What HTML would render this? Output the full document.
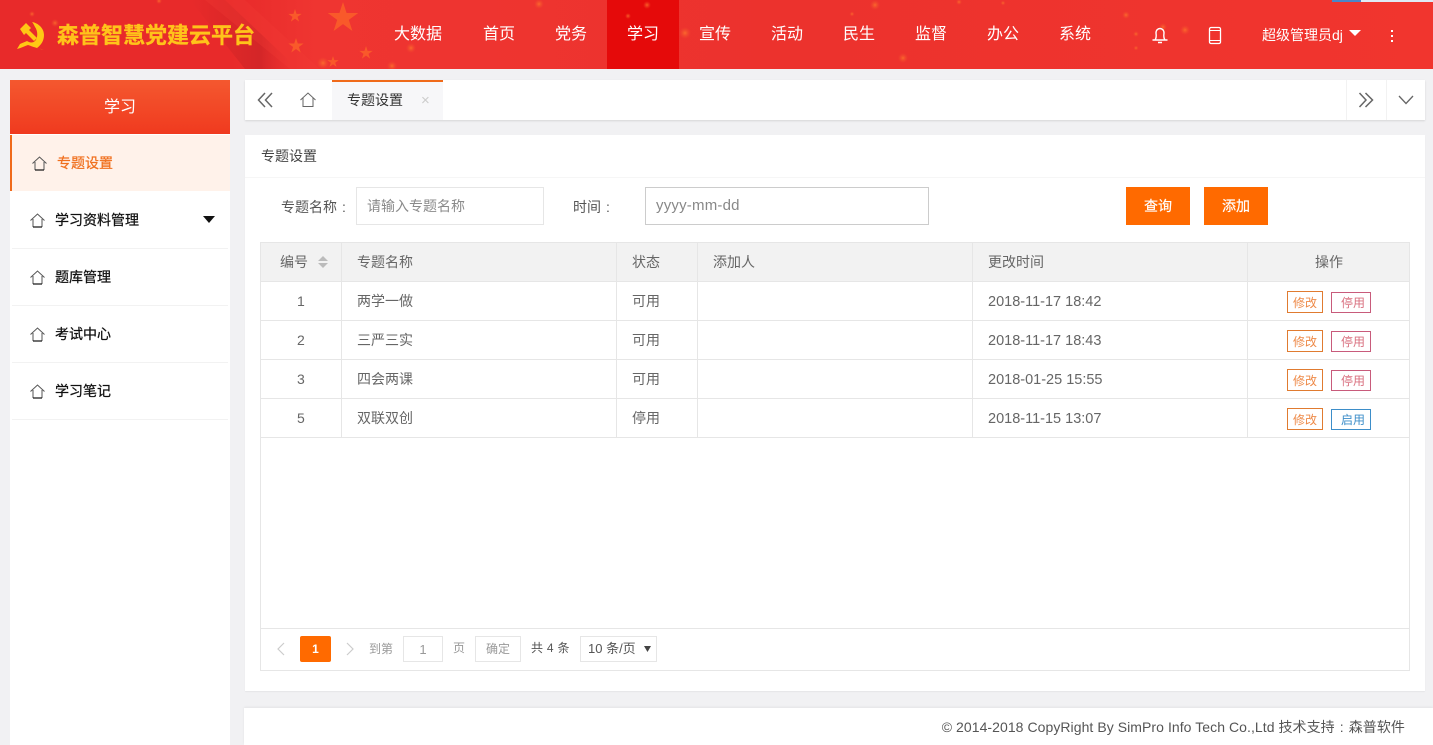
<!DOCTYPE html>
<html lang="zh"><head><meta charset="utf-8"><title>森普智慧党建云平台</title>
<style>
html,body{margin:0;padding:0;width:1433px;height:745px;overflow:hidden;background:#f1f1f3;font-family:"Liberation Sans","Noto Sans CJK SC",sans-serif;font-size:14px;color:#666}
.a{position:absolute;box-sizing:border-box}
.t{position:absolute;white-space:nowrap;line-height:20px}
.n{color:#fff;font-size:16px;top:25px}
.s{color:#111;top:0;-webkit-text-stroke:.25px #111}
.l{position:absolute;background:#e6e6e6}
.b{position:absolute;box-sizing:border-box;font-size:12px;line-height:22px;text-align:center;height:22px}
.e{border:1px solid #e07b30;color:#ee8a48;left:1287px;width:36px}
.d{border:1px solid #c85b7b;color:#d9707f;left:1331px;width:40px;height:21px;padding-left:4px;line-height:20px}
.o{border:1px solid #3d8ec9;color:#3d8ec9;left:1331px;width:40px;height:21px;padding-left:4px;line-height:20px}
.dt{font-size:14.5px;margin-top:1px}
.c{display:inline-block;width:14px;text-align:center}
svg{position:absolute;display:block}
</style></head><body>

<!-- header -->
<div class="a" style="left:0;top:0;width:1433px;height:69px;background:#ec2f2d;overflow:hidden">
<svg style="left:0;top:0" width="1433" height="69" viewBox="0 0 1433 69">
<defs>
<linearGradient id="g0" x1="0" x2="1" y1="0" y2="0"><stop offset="0" stop-color="#e82a2a"/><stop offset=".16" stop-color="#e82a2a"/><stop offset=".22" stop-color="#ef3531"/><stop offset=".55" stop-color="#ec322d"/><stop offset="1" stop-color="#f1352e"/></linearGradient>
<linearGradient id="g1" x1="0" x2="1" y1="0" y2="0"><stop offset="0" stop-color="#cf2425" stop-opacity="0"/><stop offset=".65" stop-color="#cc2326" stop-opacity=".75"/><stop offset="1" stop-color="#ea3030" stop-opacity="0"/></linearGradient>
<radialGradient id="g2"><stop offset="0" stop-color="#ff7a2c" stop-opacity=".75"/><stop offset="1" stop-color="#f4502c" stop-opacity="0"/></radialGradient>
<polygon id="st" points="0,-1 .225,-.309 .951,-.309 .363,.118 .588,.809 0,.382 -.588,.809 -.363,.118 -.951,-.309 -.225,-.309"/>
</defs>
<rect width="1433" height="69" fill="url(#g0)"/>
<polygon points="190,0 225,0 298,69 245,69" fill="url(#g1)"/>
<polygon points="205,0 245,0 320,69 290,69" fill="#f23b36" opacity=".3"/>
<g fill="#f9592a">
<use href="#st" transform="translate(343,18) scale(16)"/>
<use href="#st" transform="translate(295,16) scale(7)"/>
<use href="#st" transform="translate(296,46) scale(8)"/>
<use href="#st" transform="translate(366,53) scale(7)"/>
<use href="#st" transform="translate(333,62) scale(6)"/>
</g>
<g fill="url(#g2)">
<circle cx="411" cy="48" r="5"/><circle cx="323" cy="63" r="6"/><circle cx="392" cy="66" r="5"/>
<circle cx="32" cy="14" r="3"/><circle cx="55" cy="23" r="4"/><circle cx="159" cy="1" r="3"/>
<circle cx="539" cy="4" r="5"/><circle cx="665" cy="2" r="5"/><circle cx="685" cy="33" r="6"/>
<circle cx="875" cy="5" r="5"/><circle cx="852" cy="14" r="2.5"/><circle cx="903" cy="58" r="5"/>
<circle cx="959" cy="2" r="3"/><circle cx="1003" cy="3" r="2.5"/><circle cx="1126" cy="15" r="4"/>
<circle cx="1163" cy="27" r="4"/><circle cx="1185" cy="30" r="5"/><circle cx="1136" cy="34" r="3"/><circle cx="1136" cy="48" r="2.5"/>
</g>
<rect x="607" width="72" height="69" fill="#e50a0a"/>
<g fill="url(#g2)"><circle cx="647" cy="5" r="4"/><circle cx="628" cy="16" r="3"/></g>
<!-- party emblem -->
<g fill="#ffc814">
<path d="M32 22 C38 23 44 28 44 35 C44 41 41 45 37 48 L44 50 L41 49 C36 48 31 46 28 45 C25 46 21 48 17 49 L20 44 C22 43 25 42 27 41 C30 43 33 43 35 41 C38 38 38 31 35 27 C34 25 33 23 32 22 Z"/>
<path d="M20 29 L26 23 L31 28 L29 30 L37 38 L34 41 L26 33 L24 35 Z"/>
</g>
<!-- bell -->
<path d="M1152.500 40 H1167.500 M1155 40 C1157 37 1156 34 1156 33 C1156 30 1158 28.500 1160 28.500 C1162 28.500 1164 30 1164 33 C1164 34 1163 37 1165 40 M1158 42.500 H1162" fill="none" stroke="#fff" stroke-width="1.400"/>
<!-- phone -->
<rect x="1209.500" y="27.500" width="11" height="16" rx="1.500" fill="none" stroke="#fff" stroke-width="1.300"/>
<path d="M1210 30.500 H1220 M1210 40.500 H1220" stroke="#fff" stroke-width="1"/>
<!-- user caret -->
<polygon points="1349,30 1361,30 1355,36" fill="#fff"/>
<!-- dots -->
<g fill="#fff"><rect x="1391" y="30" width="2" height="2"/><rect x="1391" y="35" width="2" height="2"/><rect x="1391" y="40" width="2" height="2"/></g>
<rect x="1332" width="29" height="2" fill="#4a86c8"/><rect x="1361" width="72" height="2" fill="#dfeaf5"/>
</svg>
<div class="t" style="left:57px;top:24px;font-size:22px;line-height:24px;font-weight:bold;color:#ffc31a;-webkit-text-stroke:.3px #ffc31a">森普智慧党建云平台</div>
<div class="t n" style="left:394px">大数据</div>
<div class="t n" style="left:483px">首页</div>
<div class="t n" style="left:555px">党务</div>
<div class="t n" style="left:627px">学习</div>
<div class="t n" style="left:699px">宣传</div>
<div class="t n" style="left:771px">活动</div>
<div class="t n" style="left:843px">民生</div>
<div class="t n" style="left:915px">监督</div>
<div class="t n" style="left:987px">办公</div>
<div class="t n" style="left:1059px">系统</div>
<div class="t" style="left:1262px;top:25px;color:#fff">超级管理员dj</div>
</div>

<!-- sidebar -->
<div class="a" style="left:10px;top:80px;width:220px;height:665px;background:#fff"></div>
<div class="a" style="left:10px;top:80px;width:220px;height:54px;background:linear-gradient(#f4582f,#f03a1f)"></div>
<div class="t" style="left:104px;top:98px;color:#fff;font-size:16px">学习</div>
<div class="a" style="left:10px;top:135px;width:220px;height:56px;background:#fff2ea;border-left:2px solid #f06a1a"></div>
<div class="t" style="left:57px;top:153px;color:#f0701e;-webkit-text-stroke:.25px #f0701e">专题设置</div>
<svg style="left:32px;top:156px" width="15" height="15" viewBox="0 0 15 15"><path d="M.5 7.5 L7.5 1 L14.5 7.5 M3 6 V14 M12 6 V14" fill="none" stroke="#555" stroke-width="1"/><path d="M3 14 H12" stroke="#111" stroke-width="1.2"/></svg>
<div class="t s" style="left:55px;top:210px">学习资料管理</div>
<svg style="left:30px;top:213px" width="15" height="15" viewBox="0 0 15 15"><path d="M.5 7.5 L7.5 1 L14.5 7.5 M3 6 V14 M12 6 V14" fill="none" stroke="#555" stroke-width="1"/><path d="M3 14 H12" stroke="#111" stroke-width="1.2"/></svg>
<svg style="left:203px;top:216px" width="12" height="7" viewBox="0 0 12 7"><polygon points="0,0 12,0 6,7" fill="#111"/></svg>
<div class="l" style="left:12px;top:248px;width:216px;height:1px;background:#f2f2f2"></div>
<div class="t s" style="left:55px;top:267px">题库管理</div>
<svg style="left:30px;top:270px" width="15" height="15" viewBox="0 0 15 15"><path d="M.5 7.5 L7.5 1 L14.5 7.5 M3 6 V14 M12 6 V14" fill="none" stroke="#555" stroke-width="1"/><path d="M3 14 H12" stroke="#111" stroke-width="1.2"/></svg>
<div class="l" style="left:12px;top:305px;width:216px;height:1px;background:#f2f2f2"></div>
<div class="t s" style="left:55px;top:324px">考试中心</div>
<svg style="left:30px;top:327px" width="15" height="15" viewBox="0 0 15 15"><path d="M.5 7.5 L7.5 1 L14.5 7.5 M3 6 V14 M12 6 V14" fill="none" stroke="#555" stroke-width="1"/><path d="M3 14 H12" stroke="#111" stroke-width="1.2"/></svg>
<div class="l" style="left:12px;top:362px;width:216px;height:1px;background:#f2f2f2"></div>
<div class="t s" style="left:55px;top:381px">学习笔记</div>
<svg style="left:30px;top:384px" width="15" height="15" viewBox="0 0 15 15"><path d="M.5 7.5 L7.5 1 L14.5 7.5 M3 6 V14 M12 6 V14" fill="none" stroke="#555" stroke-width="1"/><path d="M3 14 H12" stroke="#111" stroke-width="1.2"/></svg>
<div class="l" style="left:12px;top:419px;width:216px;height:1px;background:#f2f2f2"></div>

<!-- tab bar -->
<div class="a" style="left:245px;top:80px;width:1180px;height:40px;background:#fff;box-shadow:0 1px 2px rgba(0,0,0,.12)"></div>
<div class="a" style="left:332px;top:80px;width:111px;height:40px;background:#f7f7f9;border-top:2px solid #f06a1a"></div>
<div class="t" style="left:347px;top:90px;color:#333">专题设置</div>
<div class="t" style="left:421px;top:91px;color:#ccc;font-size:15px">×</div>
<svg style="left:257px;top:92px" width="17" height="16" viewBox="0 0 17 16"><path d="M8 1 L1.500 8 L8 15 M15 1 L8.500 8 L15 15" fill="none" stroke="#666" stroke-width="1.500"/></svg>
<svg style="left:300px;top:92px" width="16" height="16" viewBox="0 0 16 16"><path d="M.5 8 L8 1 L15.500 8 M3 6 V14.500 H13 V6" fill="none" stroke="#666" stroke-width="1"/></svg>
<div class="l" style="left:1346px;top:80px;width:1px;height:40px;background:#f2f2f2"></div>
<div class="l" style="left:1386px;top:80px;width:1px;height:40px;background:#f2f2f2"></div>
<svg style="left:1358px;top:92px" width="16" height="16" viewBox="0 0 16 16"><path d="M1.500 1 L8 8 L1.500 15 M7.500 1 L14.500 8 L7.500 15" fill="none" stroke="#666" stroke-width="1.500"/></svg>
<svg style="left:1398px;top:95px" width="16" height="10" viewBox="0 0 16 10"><path d="M1 1 L8 8.500 L15 1" fill="none" stroke="#666" stroke-width="1.300"/></svg>

<!-- panel -->
<div class="a" style="left:245px;top:135px;width:1180px;height:556px;background:#fff;box-shadow:0 1px 1px rgba(0,0,0,.05)"></div>
<div class="l" style="left:245px;top:177px;width:1180px;height:1px;background:#f6f6f6"></div>
<div class="t" style="left:261px;top:146px;color:#444">专题设置</div>
<div class="t" style="left:281px;top:197px;color:#555">专题名称<span class="c">:</span></div>
<div class="a" style="left:356px;top:187px;width:188px;height:38px;border:1px solid #e6e6e6"></div>
<div class="t" style="left:367px;top:196px;color:#8a8a8a">请输入专题名称</div>
<div class="t" style="left:573px;top:197px;color:#555">时间<span class="c">:</span></div>
<div class="a" style="left:645px;top:187px;width:284px;height:38px;border:1px solid #ccc"></div>
<div class="t" style="left:656px;top:196px;color:#888;font-size:15px;letter-spacing:.2px">yyyy-mm-dd</div>
<div class="a" style="left:1126px;top:187px;width:64px;height:38px;background:#ff6a00;color:#fff;text-align:center;line-height:38px;-webkit-text-stroke:.2px #fff">查询</div>
<div class="a" style="left:1204px;top:187px;width:64px;height:38px;background:#ff6a00;color:#fff;text-align:center;line-height:38px;-webkit-text-stroke:.2px #fff">添加</div>

<!-- table -->
<div class="a" style="left:260px;top:242px;width:1150px;height:429px;border:1px solid #e6e6e6"></div>
<div class="a" style="left:261px;top:243px;width:1148px;height:38px;background:#f2f2f2"></div>
<div class="l" style="left:261px;top:281px;width:1148px;height:1px"></div>
<div class="l" style="left:261px;top:320px;width:1148px;height:1px"></div>
<div class="l" style="left:261px;top:359px;width:1148px;height:1px"></div>
<div class="l" style="left:261px;top:398px;width:1148px;height:1px"></div>
<div class="l" style="left:261px;top:437px;width:1148px;height:1px"></div>
<div class="l" style="left:261px;top:628px;width:1148px;height:1px"></div>
<div class="l" style="left:341px;top:243px;width:1px;height:194px"></div>
<div class="l" style="left:616px;top:243px;width:1px;height:194px"></div>
<div class="l" style="left:697px;top:243px;width:1px;height:194px"></div>
<div class="l" style="left:972px;top:243px;width:1px;height:194px"></div>
<div class="l" style="left:1247px;top:243px;width:1px;height:194px"></div>

<div class="t" style="left:280px;top:252px">编号</div>
<svg style="left:318px;top:256px" width="10" height="12" viewBox="0 0 10 12"><polygon points="5,0 10,5 0,5" fill="#bbb"/><polygon points="0,7 10,7 5,12" fill="#bbb"/></svg>
<div class="t" style="left:357px;top:252px">专题名称</div>
<div class="t" style="left:632px;top:252px">状态</div>
<div class="t" style="left:713px;top:252px">添加人</div>
<div class="t" style="left:988px;top:252px">更改时间</div>
<div class="t" style="left:1315px;top:252px">操作</div>

<div class="t" style="left:297px;top:291px">1</div>
<div class="t" style="left:357px;top:291px">两学一做</div>
<div class="t" style="left:632px;top:291px">可用</div>
<div class="t dt" style="left:988px;top:291px">2018-11-17 18:42</div>
<div class="b e" style="top:291px">修改</div><div class="b d" style="top:292px">停用</div>

<div class="t" style="left:297px;top:330px">2</div>
<div class="t" style="left:357px;top:330px">三严三实</div>
<div class="t" style="left:632px;top:330px">可用</div>
<div class="t dt" style="left:988px;top:330px">2018-11-17 18:43</div>
<div class="b e" style="top:330px">修改</div><div class="b d" style="top:331px">停用</div>

<div class="t" style="left:297px;top:369px">3</div>
<div class="t" style="left:357px;top:369px">四会两课</div>
<div class="t" style="left:632px;top:369px">可用</div>
<div class="t dt" style="left:988px;top:369px">2018-01-25 15:55</div>
<div class="b e" style="top:369px">修改</div><div class="b d" style="top:370px">停用</div>

<div class="t" style="left:297px;top:408px">5</div>
<div class="t" style="left:357px;top:408px">双联双创</div>
<div class="t" style="left:632px;top:408px">停用</div>
<div class="t dt" style="left:988px;top:408px">2018-11-15 13:07</div>
<div class="b e" style="top:408px">修改</div><div class="b o" style="top:409px">启用</div>

<!-- pagination -->
<svg style="left:276px;top:642px" width="10" height="14" viewBox="0 0 10 14"><path d="M8 1 L2 7 L8 13" fill="none" stroke="#ccc" stroke-width="1.200"/></svg>
<div class="a" style="left:300px;top:636px;width:31px;height:26px;background:#ff6a00;border-radius:2px;color:#fff;font-size:12px;font-weight:bold;text-align:center;line-height:26px">1</div>
<svg style="left:345px;top:642px" width="10" height="14" viewBox="0 0 10 14"><path d="M2 1 L8 7 L2 13" fill="none" stroke="#ccc" stroke-width="1.200"/></svg>
<div class="t" style="left:369px;top:639px;font-size:12px;color:#999">到第</div>
<div class="a" style="left:403px;top:636px;width:40px;height:26px;border:1px solid #e6e6e6;color:#999;font-size:13px;text-align:center;line-height:26px">1</div>
<div class="t" style="left:453px;top:638px;font-size:12px;color:#999">页</div>
<div class="a" style="left:475px;top:636px;width:46px;height:26px;border:1px solid #e6e6e6;color:#999;font-size:12px;text-align:center;line-height:25px">确定</div>
<div class="t" style="left:531px;top:638px;font-size:12px;letter-spacing:.3px;color:#555">共 4 条</div>
<div class="a" style="left:580px;top:636px;width:77px;height:26px;border:1px solid #e6e6e6"></div>
<div class="t" style="left:588px;top:639px;font-size:13px;color:#555">10 条/页</div>
<svg style="left:644px;top:646px" width="7" height="6" viewBox="0 0 7 6"><polygon points="0,0 7,0 3.500,6" fill="#444"/></svg>

<!-- footer -->
<div class="a" style="left:244px;top:708px;width:1189px;height:37px;background:#fff;box-shadow:0 -1px 2px rgba(0,0,0,.06)"></div>
<div class="t" style="right:28px;top:717px;color:#555;letter-spacing:.06px">© 2014-2018 CopyRight By SimPro Info Tech Co.,Ltd 技术支持<span class="c">:</span>森普软件</div>
</body></html>
